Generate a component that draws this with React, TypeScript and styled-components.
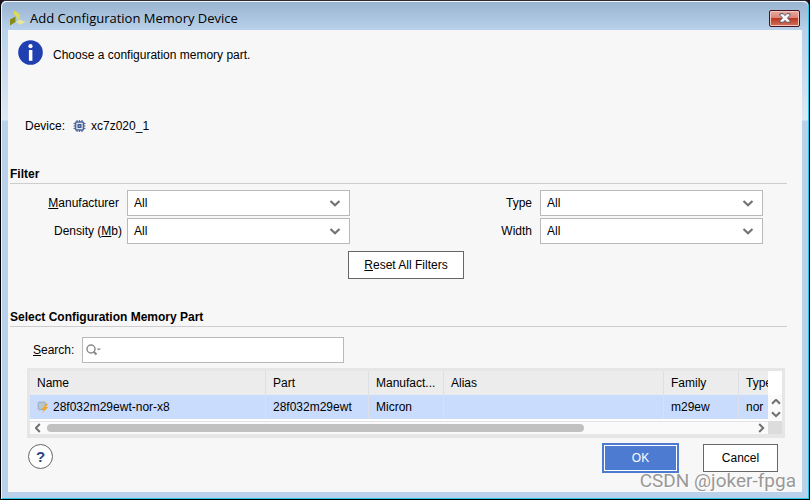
import React from "react";
import styled, { createGlobalStyle } from "styled-components";

const GlobalStyle = createGlobalStyle`
  *, *::before, *::after { box-sizing: border-box; }
  body { margin: 0; background: #17131c; }
  body, button, input, select, table {
    font-family: "Liberation Sans", Arial, sans-serif;
    font-size: 12px;
    line-height: 16px;
    color: #000;
  }
`;

const Frame = styled.div`
  position: relative;
  display: flex;
  flex-direction: column;
  min-height: 100vh;
  border: 1px solid #000;
  border-top-color: #2b2833;
  border-radius: 6px 6px 0 0;
  background: #b9d1ea;
  box-shadow: inset 1px 1px 0 #eef4fb, inset -1px -1px 0 #29c5e6;
`;

const TitleBar = styled.header`
  display: flex;
  align-items: center;
  height: 29px;
  margin: 0 1px;
  padding: 4px 8px 0 7px;
  border-top: 1px solid #f4f8fc;
  border-radius: 5px 5px 0 0;
  background: linear-gradient(#99b4d1, #b9d1ea);
`;

const Title = styled.h1`
  flex: 1;
  margin: 0 0 0 4px;
  font-family: "Open Sans", "Noto Sans", sans-serif;
  font-size: 13px;
  font-weight: 400;
`;

const CloseButton = styled.button`
  display: grid;
  place-items: center;
  width: 31px;
  height: 17px;
  padding: 0;
  border: 1px solid #431422;
  border-radius: 2px;
  background: linear-gradient(#e9a99f 0%, #dc8577 45%, #b93a22 50%, #d4705a 100%);
  box-shadow: inset 0 0 0 1px #f1c4bc;
`;

const Sides = styled.div`
  display: flex;
  flex: 1;
  padding: 0 7px 7px;
  background: linear-gradient(#b9d1ea, #dde8f5 90px, #b9d1ea 91px) 1px 0 / calc(100% - 2px) calc(100% - 1px) no-repeat;
`;

const Content = styled.main`
  display: flex;
  flex: 1;
  min-width: 0;
  flex-direction: column;
  background: #f7f7f7;
`;

const Intro = styled.div`
  display: flex;
  align-items: center;
  gap: 10px;
  padding: 10px 10px 0;
`;

const Text = styled.p`
  margin: 0;
  padding-top: 4px;
`;

const DeviceRow = styled.div`
  display: flex;
  align-items: center;
  gap: 5px;
  margin: 53px 0 0 17px;

  svg { margin-left: 3px; }
`;

const SectionTitle = styled.h2<{ $gap: number }>`
  margin: ${(p) => p.$gap}px 15px 0 2px;
  padding-bottom: 1px;
  border-bottom: 1px solid #cdcdcd;
  font-size: 12px;
  line-height: 16px;
  font-weight: 700;
`;

const Filters = styled.div`
  display: grid;
  grid-template-columns: 119px 1fr 190px 1fr;
  align-items: center;
  row-gap: 2px;
  margin: 6px 39px 0 0;
`;

const FieldLabel = styled.label`
  padding-right: 8px;
  text-align: right;
  white-space: nowrap;
`;

const DensityLabel = styled(FieldLabel)`
  padding-right: 5px;
`;

const Combo = styled.div`
  display: grid;
  align-items: center;

  > * { grid-area: 1 / 1; }
  > svg { justify-self: end; margin-right: 9px; pointer-events: none; }
`;

const Select = styled.select`
  width: 100%;
  height: 26px;
  padding: 0 24px 0 6px;
  border: 1px solid #b9b9b9;
  border-radius: 0;
  background: #fff;
  appearance: none;
`;

const Button = styled.button`
  height: 28px;
  padding: 0 15px;
  border: 1px solid #666;
  background: #fff;
`;

const ResetButton = styled(Button)`
  align-self: center;
  margin: 7px 0 0 2px;
`;

const SearchRow = styled.div`
  display: flex;
  align-items: center;
  gap: 8px;
  margin: 10px 0 0 25px;
`;

const SearchBox = styled.div`
  display: flex;
  align-items: center;
  width: 262px;
  height: 26px;
  padding-left: 3px;
  border: 1px solid #b9b9b9;
  background: #fff;
`;

const SearchInput = styled.input`
  flex: 1;
  min-width: 0;
  border: 0;
  outline: 0;
  background: transparent;
`;

const TablePanel = styled.div`
  display: grid;
  grid-template-columns: minmax(0, 1fr) 14px;
  grid-template-rows: 50px 13px;
  margin: 5px 17px 0 19px;
  border: 3px solid #e6e6e6;
  border-bottom-width: 4px;
  background: #fff;
`;

const Viewport = styled.div`
  overflow: hidden;
`;

const Table = styled.table`
  width: 100%;
  table-layout: fixed;
  border-collapse: separate;
  border-spacing: 0;
`;

const Col = styled.col<{ $w?: number }>`
  width: ${(p) => (p.$w ? `${p.$w}px` : "auto")};
`;

const cell = `
  height: 24px;
  padding: 0 0 0 7px;
  overflow: hidden;
  white-space: nowrap;
  text-align: left;
  font-weight: 400;
  border-right: 1px solid #dcdfe3;
  &:last-child { border-right: 0; }
`;

const Th = styled.th`
  ${cell}
  background: #ececec;
`;

const Td = styled.td`
  ${cell}
  background: #cadcfe;
`;

const NameCell = styled.div`
  display: flex;
  align-items: center;
  gap: 4px;
`;

const VerticalScroll = styled.div`
  display: flex;
  flex-direction: column;
  align-items: center;
  justify-content: space-between;
  margin-top: 24px;
  padding: 4px 0 3px 1px;
  background: #fafafa;
`;

const HorizontalScroll = styled.div`
  display: flex;
  align-items: center;
  padding: 0 3px 0 5px;
  border-top: 1px solid #e2e2e2;
  background: #fafafa;
`;

const ArrowButton = styled.button`
  display: grid;
  padding: 0;
  border: 0;
  background: transparent;
`;

const Track = styled.div`
  flex: 1;
  margin: 0 4px 0 5px;
`;

const Thumb = styled.div`
  width: 76%;
  height: 8px;
  border-radius: 4px;
  background: #c1c1c1;
`;

const Corner = styled.div`
  background: #dcdcdc;
`;

const Footer = styled.footer`
  display: flex;
  align-items: flex-start;
  margin: 5px 24px 0 20px;
`;

const HelpButton = styled.button`
  width: 25px;
  height: 25px;
  margin: 1px auto 0 0;
  padding: 0;
  border: 1px solid #666;
  border-radius: 50%;
  background: #fff;
  color: #2b4382;
  font-size: 15px;
  font-weight: 700;
`;

const OkButton = styled.button`
  width: 77px;
  height: 30px;
  margin-right: 24px;
  border: 2px solid #4d7bd1;
  background: #4d7bd1;
  box-shadow: inset 0 0 0 1px #fff;
  color: #fff;
`;

const CancelButton = styled(Button)`
  width: 75px;
  margin-top: 1px;
  padding: 0;
`;

const Watermark = styled.span`
  position: absolute;
  right: 13px;
  bottom: 6px;
  color: #999;
  font-family: Roboto, sans-serif;
  font-size: 19px;
  font-weight: 400;
  line-height: 24px;
  text-shadow: 1px 1px 0 #fff;
  pointer-events: none;
`;

type Direction = "up" | "down" | "left" | "right";
const angles: Record<Direction, number> = { down: 0, left: 90, up: 180, right: 270 };

const Chevron = ({ dir = "down" }: { dir?: Direction }) => (
  <svg width="12" height="12" viewBox="0 0 12 12" aria-hidden="true">
    <path d="M1.5 4 6 8.2 10.5 4" fill="none" stroke="#737373" strokeWidth="2.2" transform={`rotate(${angles[dir]} 6 6)`} />
  </svg>
);

const ScrollChevron = ({ dir }: { dir: Direction }) => {
  const wide = dir === "up" || dir === "down";
  return (
    <svg width={wide ? 10 : 7} height={wide ? 7 : 10} viewBox={wide ? "1 3 10 7" : "3 1 7 10"} aria-hidden="true">
      <path d="M2 4.2 6 8.2 10 4.2" fill="none" stroke="#6e6e6e" strokeWidth="2" transform={`rotate(${angles[dir]} 6 6)`} />
    </svg>
  );
};

const Logo = () => (
  <svg width="17" height="17" viewBox="0 0 17 17" aria-hidden="true">
    <path d="M5 .5 10.5 4v6L7.5 8V6L5 4.8z" fill="#dddd55" />
    <path d="M1 9.5 6.5 6.5v5.5L1 15.5z" fill="#858b16" />
    <path d="M6.8 12 11 9.8l5.5 2-5 3z" fill="#e8e795" />
  </svg>
);

const Info = () => (
  <svg width="25" height="25" viewBox="0 0 25 25" role="img" aria-label="Information">
    <circle cx="12.5" cy="12.5" r="12.3" fill="#203fb1" />
    <circle cx="12.5" cy="6.2" r="2.1" fill="#fff" />
    <path d="M10.9 10h3.5v10.8h-3.5z" fill="#fff" />
  </svg>
);

const Chip = () => (
  <svg width="13" height="12" viewBox="0 0 12 12" aria-hidden="true">
    <path d="M3.5 0v12M6 0v12M8.5 0v12M0 3.5h12M0 6h12M0 8.5h12" stroke="#5b74a8" strokeWidth="1.2" />
    <rect x="2" y="2" width="8" height="8" rx="1" fill="#e4eaf3" stroke="#4a649c" strokeWidth="1.6" />
    <rect x="4.6" y="4.6" width="2.8" height="2.8" fill="#91a4c6" stroke="#3c568e" strokeWidth="1.2" />
  </svg>
);

const Part = () => (
  <svg width="12" height="12" viewBox="0 0 12 12" aria-hidden="true">
    <path d="M2.5 0v10M5 0v10M7.5 0v10M0 2.5h10M0 5h10M0 7.5h10" stroke="#c3ccd4" />
    <rect x="1.2" y="1.2" width="7.3" height="7.3" rx="1" fill="#b4c7d4" stroke="#a0abb3" />
    <path d="M9.4 2.8 4.8 8h2.5l-2.2 4 6.2-6H8.8l2.4-3.2z" fill="#f6a61c" />
  </svg>
);

const SearchIcon = () => (
  <svg width="16" height="12" viewBox="0 0 16 12" aria-hidden="true">
    <circle cx="5" cy="5" r="4" fill="none" stroke="#8b8b8b" strokeWidth="1.5" />
    <path d="m7.5 7.5 3 3" stroke="#8b8b8b" strokeWidth="2.2" />
    <path d="M10.5 4.5H15l-2.2 2z" fill="#8b8b8b" />
  </svg>
);

const CloseIcon = () => (
  <svg width="12" height="10" viewBox="0 0 12 10" aria-hidden="true">
    <path d="M1 .7h3.2L6 2.6 7.8.7H11v1.6L8.5 5 11 7.7v1.6H7.8L6 7.4 4.2 9.3H1V7.7L3.5 5 1 2.3z" fill="#f7f7f7" stroke="#555b6b" />
  </svg>
);

const ComboBox = ({ id }: { id: string }) => (
  <Combo>
    <Select id={id} defaultValue="All">
      <option>All</option>
    </Select>
    <Chevron />
  </Combo>
);

const headers = ["Name", "Part", "Manufact...", "Alias", "Family", "Type"];
const row = ["28f032m29ewt", "Micron", "", "m29ew", "nor"];

export default function App() {
  return (
    <>
      <GlobalStyle />
      <Frame>
        <TitleBar>
          <Logo />
          <Title>Add Configuration Memory Device</Title>
          <CloseButton aria-label="Close"><CloseIcon /></CloseButton>
        </TitleBar>
        <Sides>
          <Content>
            <Intro>
              <Info />
              <Text>Choose a configuration memory part.</Text>
            </Intro>
            <DeviceRow>
              <span>Device:</span>
              <Chip />
              <span>xc7z020_1</span>
            </DeviceRow>

            <SectionTitle $gap={32}>Filter</SectionTitle>
            <Filters>
              <FieldLabel htmlFor="manufacturer"><u>M</u>anufacturer</FieldLabel>
              <ComboBox id="manufacturer" />
              <FieldLabel htmlFor="type">Type</FieldLabel>
              <ComboBox id="type" />
              <DensityLabel htmlFor="density">Density (<u>M</u>b)</DensityLabel>
              <ComboBox id="density" />
              <FieldLabel htmlFor="width">Width</FieldLabel>
              <ComboBox id="width" />
            </Filters>
            <ResetButton><u>R</u>eset All Filters</ResetButton>

            <SectionTitle $gap={30}>Select Configuration Memory Part</SectionTitle>
            <SearchRow>
              <label htmlFor="search"><u>S</u>earch:</label>
              <SearchBox>
                <SearchIcon />
                <SearchInput id="search" type="text" />
              </SearchBox>
            </SearchRow>

            <TablePanel>
              <Viewport>
                <Table>
                  <colgroup>
                    <Col $w={236} />
                    <Col $w={103} />
                    <Col $w={75} />
                    <Col />
                    <Col $w={75} />
                    <Col $w={29} />
                  </colgroup>
                  <thead>
                    <tr>{headers.map((h) => <Th key={h}>{h}</Th>)}</tr>
                  </thead>
                  <tbody>
                    <tr>
                      <Td><NameCell><Part />28f032m29ewt-nor-x8</NameCell></Td>
                      {row.map((value, i) => <Td key={i}>{value}</Td>)}
                    </tr>
                  </tbody>
                </Table>
              </Viewport>
              <VerticalScroll>
                <ArrowButton aria-label="Scroll up"><ScrollChevron dir="up" /></ArrowButton>
                <ArrowButton aria-label="Scroll down"><ScrollChevron dir="down" /></ArrowButton>
              </VerticalScroll>
              <HorizontalScroll>
                <ArrowButton aria-label="Scroll left"><ScrollChevron dir="left" /></ArrowButton>
                <Track><Thumb /></Track>
                <ArrowButton aria-label="Scroll right"><ScrollChevron dir="right" /></ArrowButton>
              </HorizontalScroll>
              <Corner />
            </TablePanel>

            <Footer>
              <HelpButton aria-label="Help">?</HelpButton>
              <OkButton>OK</OkButton>
              <CancelButton>Cancel</CancelButton>
            </Footer>
          </Content>
        </Sides>
        <Watermark>CSDN @joker-fpga</Watermark>
      </Frame>
    </>
  );
}
